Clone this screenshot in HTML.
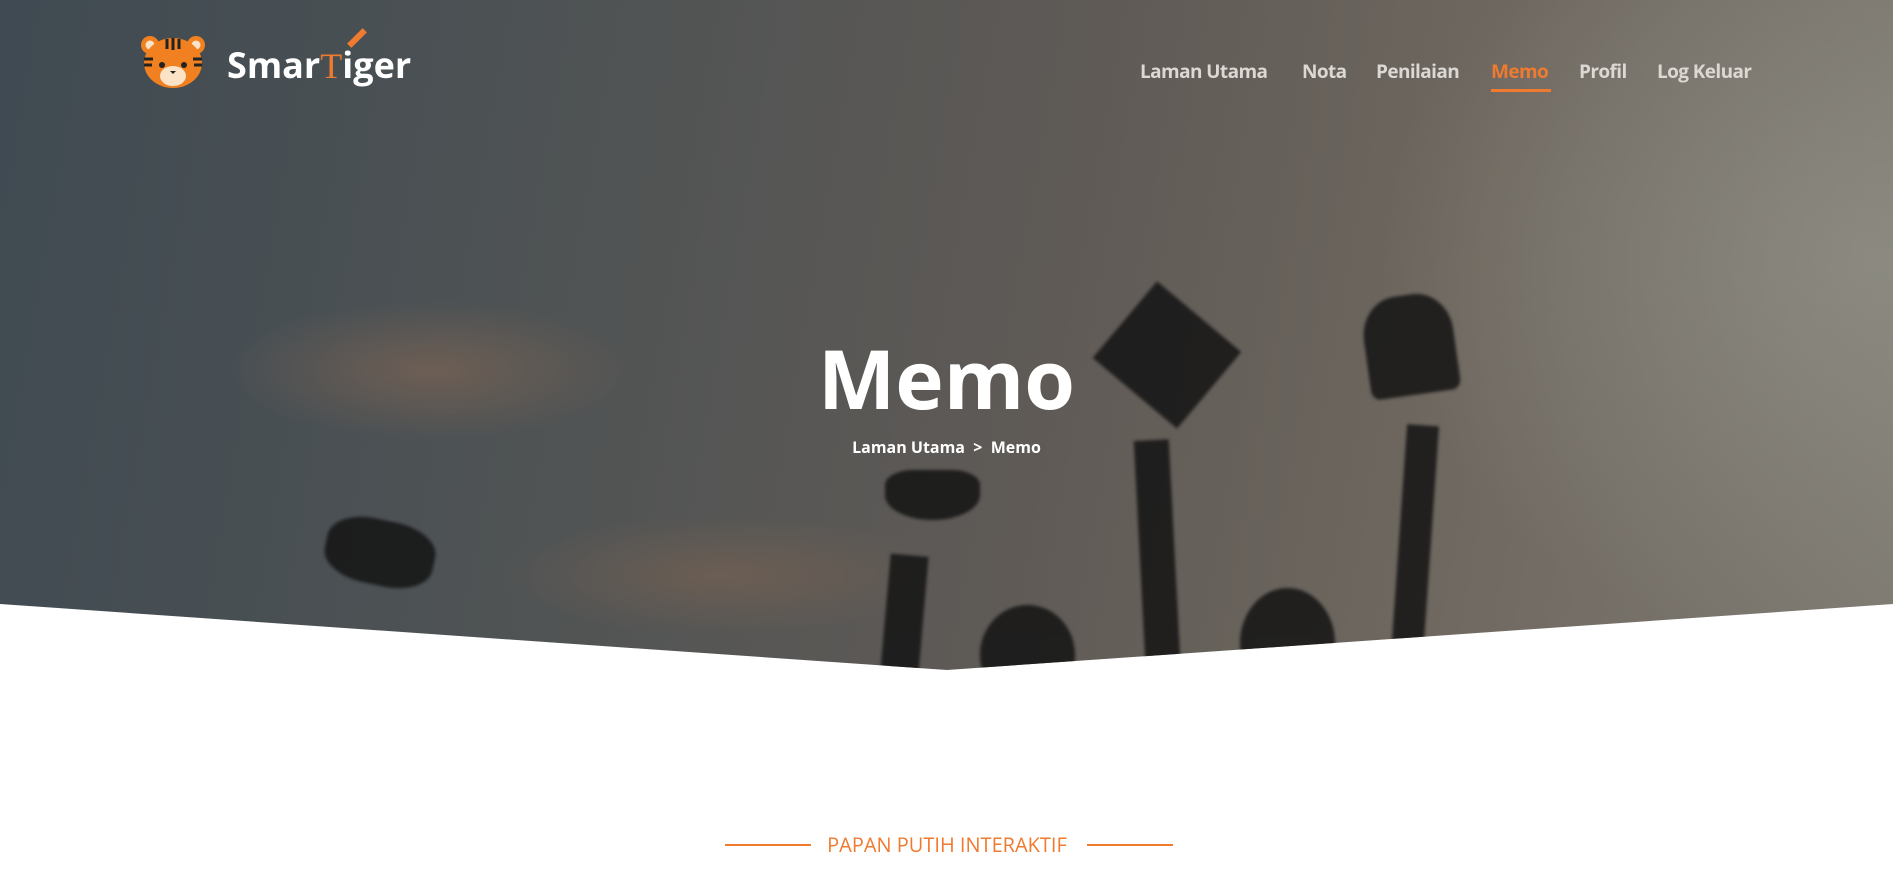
<!DOCTYPE html>
<html><head><meta charset="utf-8"><style>
*{margin:0;padding:0;box-sizing:border-box}
body{width:1893px;height:876px;overflow:hidden;background:#fff;font-family:"Open Sans","Liberation Sans",sans-serif}
.hero{position:absolute;left:0;top:0;width:1893px;height:672px;
background:
radial-gradient(ellipse 200px 70px at 430px 370px,rgba(150,110,85,.45),transparent),
radial-gradient(ellipse 220px 60px at 720px 575px,rgba(140,105,80,.4),transparent),
radial-gradient(ellipse 500px 400px at 1880px 260px,rgba(150,150,140,.6),transparent),
linear-gradient(100deg,#3f4a52 0%,#4f5354 30%,#5f5a56 55%,#6e675f 75%,#7e7a72 100%);
clip-path:polygon(0 0,1893px 0,1893px 604px,947px 670px,0 604px)}
.sil{position:absolute;background:#141414;opacity:.85;filter:blur(1.5px)}
.nav{position:absolute;top:58px;font-size:19px;font-weight:bold;color:#dcd8d4;letter-spacing:-.6px}
.logo{position:absolute;left:227px;top:40px;font-size:36px;font-weight:bold;color:#fff}
</style></head><body>
<div class="hero">
<div class="sil" style="left:1112px;top:305px;width:110px;height:100px;transform:rotate(40deg)"></div>
<div class="sil" style="left:1365px;top:295px;width:90px;height:100px;border-radius:40% 40% 10% 10%;transform:rotate(-8deg)"></div>
<div class="sil" style="left:885px;top:470px;width:95px;height:50px;border-radius:30% 30% 50% 50%"></div>
<div class="sil" style="left:325px;top:520px;width:110px;height:65px;border-radius:40%;transform:rotate(12deg)"></div>
<div class="sil" style="left:1140px;top:440px;width:35px;height:240px;transform:rotate(-3deg)"></div>
<div class="sil" style="left:1398px;top:425px;width:32px;height:260px;transform:rotate(4deg)"></div>
<div class="sil" style="left:885px;top:555px;width:38px;height:130px;transform:rotate(5deg)"></div>
<div class="sil" style="left:980px;top:605px;width:95px;height:100px;border-radius:50%"></div>
<div class="sil" style="left:1240px;top:588px;width:95px;height:110px;border-radius:50%"></div>
</div>
<svg style="position:absolute;left:140px;top:33px" width="66" height="56" viewBox="0 0 66 56">
<circle cx="10" cy="12" r="9" fill="#f08020"/><circle cx="56" cy="12" r="9" fill="#f08020"/>
<circle cx="10" cy="12" r="4.5" fill="#fbe3c8"/><circle cx="56" cy="12" r="4.5" fill="#fbe3c8"/>
<ellipse cx="33" cy="30" rx="29" ry="25" fill="#f08020"/>
<path d="M27 6v10M33 5v12M39 6v10M4 26h9M4 32h8M53 26h9M54 32h8" stroke="#222" stroke-width="3"/>
<ellipse cx="33" cy="43" rx="13" ry="10" fill="#fbe3c8"/>
<circle cx="22" cy="32" r="3" fill="#222"/><circle cx="44" cy="32" r="3" fill="#222"/>
<path d="M30 38h6l-3 3z" fill="#222"/>
</svg>
<div class="logo">Smar<span style="color:#f07a30;font-family:'Liberation Serif',serif;font-weight:normal">T</span>iger</div>
<div style="position:absolute;left:346px;top:35px;width:22px;height:6px;background:#f07a30;transform:rotate(-45deg)"></div>
<div class="nav" style="left:1140px">Laman Utama</div>
<div class="nav" style="left:1302px">Nota</div>
<div class="nav" style="left:1376px">Penilaian</div>
<div class="nav" style="left:1491px;color:#f07a30">Memo</div>
<div style="position:absolute;left:1491px;top:89px;width:60px;height:3px;background:#f07a30"></div>
<div class="nav" style="left:1579px">Profil</div>
<div class="nav" style="left:1657px">Log Keluar</div>
<div style="position:absolute;left:0;width:1893px;top:328px;text-align:center;color:#fff;font-size:82px;font-weight:bold;line-height:100px">Memo</div>
<div style="position:absolute;left:0;width:1893px;top:436px;text-align:center;color:#fff;font-size:16px;font-weight:bold">Laman Utama &nbsp;&gt;&nbsp; Memo</div>
<div style="position:absolute;left:725px;top:844px;width:86px;height:2px;background:#f07a30"></div>
<div style="position:absolute;left:1087px;top:844px;width:86px;height:2px;background:#f07a30"></div>
<div style="position:absolute;left:812px;width:270px;top:831px;text-align:center;color:#f07a30;font-size:20px">PAPAN PUTIH INTERAKTIF</div>
</body></html>
